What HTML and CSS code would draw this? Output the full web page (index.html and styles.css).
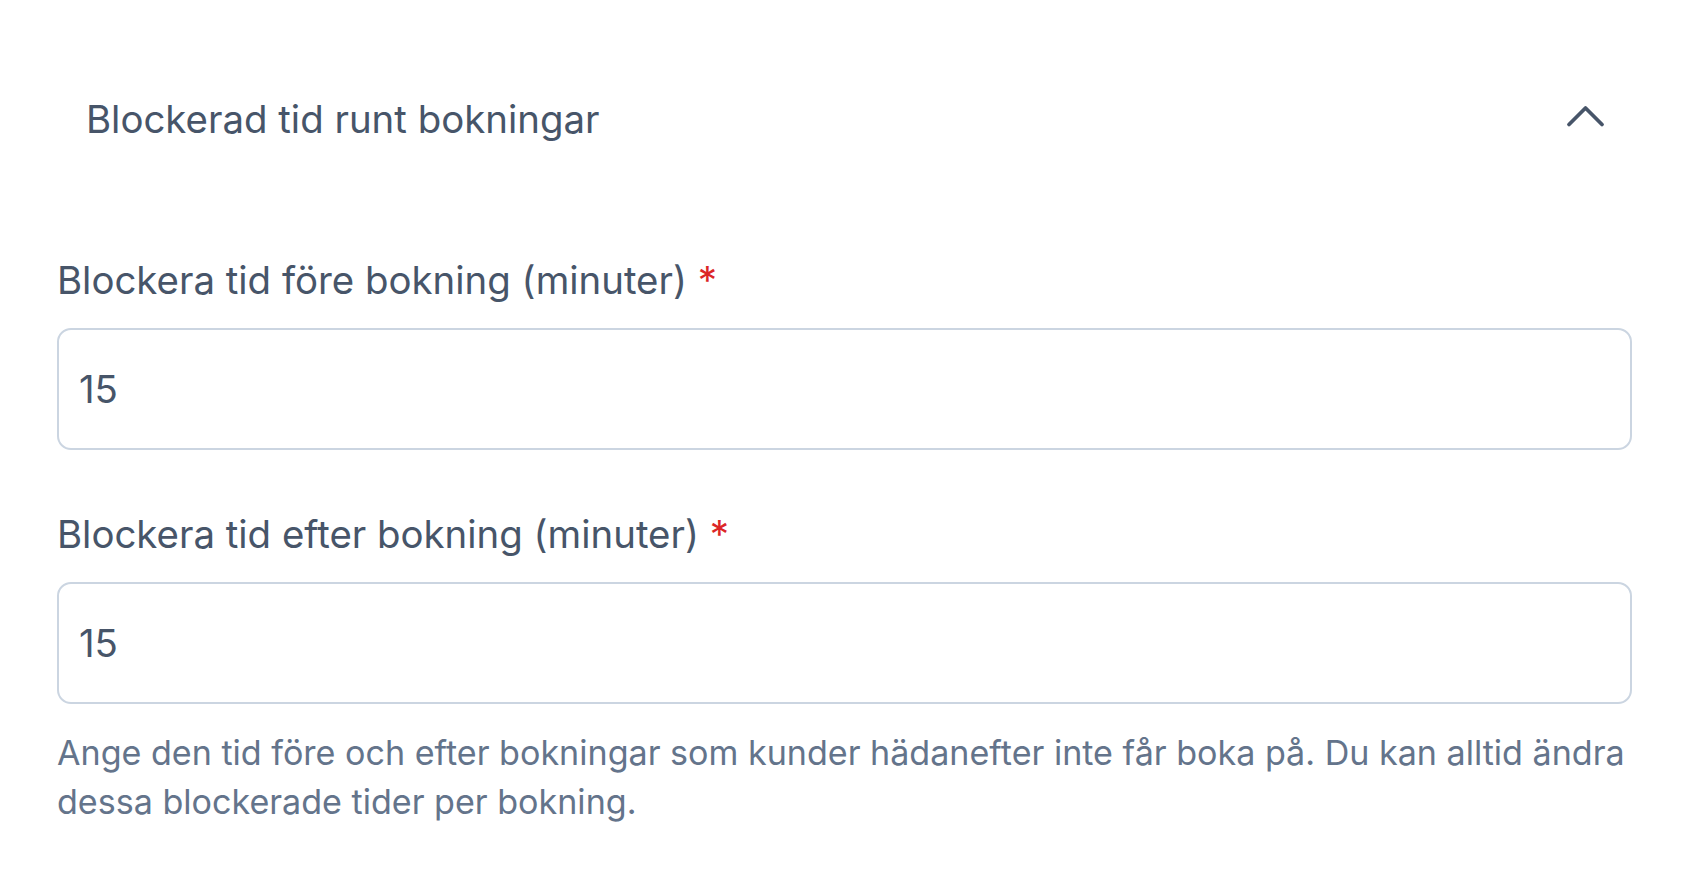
FILE: index.html
```html
<!DOCTYPE html>
<html lang="sv">
<head>
<meta charset="utf-8">
<title>Blockerad tid runt bokningar</title>
<link rel="stylesheet" href="styles.css">
</head>
<body>
<section class="panel">
  <div class="panel-header">
    <h2 class="panel-title">Blockerad tid runt bokningar</h2>
    <button class="toggle" type="button" aria-label="Fäll ihop">
      <svg class="chevron" width="40" height="24" viewBox="0 0 40 24" aria-hidden="true">
        <polyline points="4,20.5 20.5,4 37,20.5" fill="none" stroke="currentColor" stroke-width="3.8" stroke-linecap="round" stroke-linejoin="round"/>
      </svg>
    </button>
  </div>
  <div class="field">
    <label class="field-label" for="before">Blockera tid före bokning (minuter) <span class="req">*</span></label>
    <input class="field-input" id="before" type="text" value="15">
  </div>
  <div class="field">
    <label class="field-label" for="after">Blockera tid efter bokning (minuter) <span class="req">*</span></label>
    <input class="field-input" id="after" type="text" value="15">
  </div>
  <p class="help">Ange den tid före och efter bokningar som kunder hädanefter inte får boka på. Du kan alltid ändra dessa blockerade tider per bokning.</p>
</section>
</body>
</html>
```

FILE: styles.css
```css
html, body {
  margin: 0;
  padding: 0;
  background: #ffffff;
}

body {
  font-family: Inter, "Noto Sans", "Liberation Sans", sans-serif;
  color: #475569;
}

.panel {
  padding: 92px 60px 0 57px;
}

.panel-header {
  display: flex;
  align-items: center;
  justify-content: space-between;
  padding-left: 29px;
  padding-right: 27px;
}

.panel-title {
  margin: 0;
  font-size: 38.4px;
  font-weight: 400;
  line-height: 54px;
  color: #475569;
}

.toggle {
  display: flex;
  align-items: center;
  justify-content: center;
  border: 0;
  padding: 0;
  background: transparent;
  color: #475569;
  cursor: pointer;
  margin-top: -6px;
}

.chevron {
  display: block;
}

.field {
  display: flex;
  flex-direction: column;
  gap: 21px;
  margin-top: 57px;
}

.panel-header + .field {
  margin-top: 107px;
}

.field-label {
  font-size: 38.4px;
  line-height: 54px;
  color: #475569;
}

.req {
  color: #dc2626;
}

.field-input {
  box-sizing: border-box;
  width: 100%;
  height: 122px;
  margin: 0;
  padding: 0 20px;
  border: 2px solid #cbd5e1;
  border-radius: 14px;
  background: #ffffff;
  font-family: inherit;
  font-size: 38.4px;
  color: #475569;
  outline: none;
}

.help {
  margin: 24px 0 0;
  font-size: 34.1px;
  line-height: 49px;
  color: #64748b;
}
```
